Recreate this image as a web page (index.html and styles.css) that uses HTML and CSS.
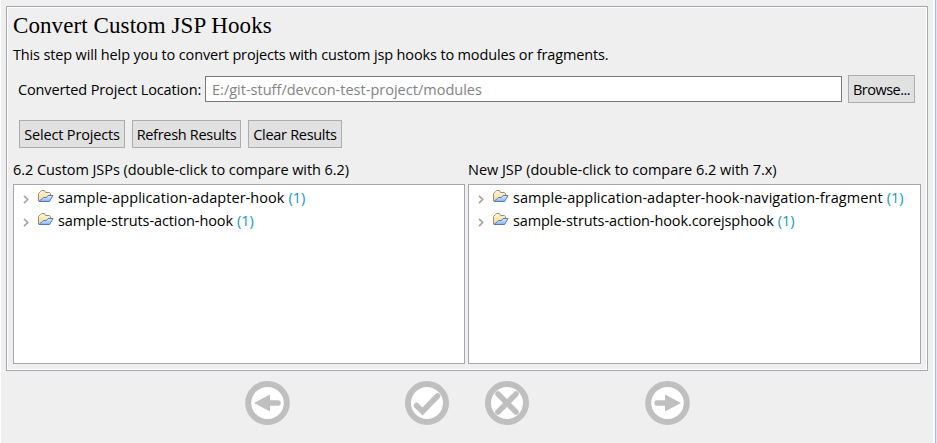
FILE: index.html
```html
<!DOCTYPE html>
<html lang="en">
<head>
<meta charset="utf-8">
<title>Convert Custom JSP Hooks</title>
<link rel="stylesheet" href="styles.css">
</head>
<body>
<svg class="defs" width="0" height="0">
  <defs>
    <linearGradient id="back" x1="0" y1="0" x2="0" y2="1"><stop offset="0" stop-color="#fff6d8"/><stop offset="1" stop-color="#f6d98c"/></linearGradient>
    <linearGradient id="front" x1="0" y1="0" x2="0" y2="1"><stop offset="0" stop-color="#e4f1ff"/><stop offset="1" stop-color="#86b4f4"/></linearGradient>
  </defs>
  <symbol id="folder" viewBox="0 0 16 13">
    <path d="M.5 11V3.500L2.500 1.500 3.500.5h3l1 2h4l1 1.200V6" fill="url(#back)" stroke="#96917f"/>
    <path d="M.8 11.500 4.500 8.500 5.500 7.500h3l1.500-2h5L11.500 11.500Z" fill="url(#front)" stroke="#5a76bc"/>
  </symbol>
  <symbol id="chevron" viewBox="0 0 6 9"><path d="M1 .8 4.700 4.500 1 8.200" fill="none" stroke="#a6a6a6" stroke-width="1.700"/></symbol>
</svg>
<main class="page">
  <section class="group">
    <h1 class="title">Convert Custom JSP Hooks</h1>
    <p class="intro">This step will help you to convert projects with custom jsp hooks to modules or fragments.</p>
    <div class="location">
      <label class="location-label">Converted Project Location:</label>
      <div class="field">E:/git-stuff/devcon-test-project/modules</div>
      <button class="btn browse">Browse...</button>
    </div>
    <div class="actions">
      <button class="btn select">Select Projects</button>
      <button class="btn refresh">Refresh Results</button>
      <button class="btn clear">Clear Results</button>
    </div>
    <div class="panes">
      <div class="pane">
        <h2 class="caption old">6.2 Custom JSPs (double-click to compare with 6.2)</h2>
        <ul class="tree">
          <li><svg class="chev"><use href="#chevron"/></svg><svg class="fold"><use href="#folder"/></svg><span class="name adapter">sample-application-adapter-hook</span><span class="count">(1)</span></li>
          <li><svg class="chev"><use href="#chevron"/></svg><svg class="fold"><use href="#folder"/></svg><span class="name struts">sample-struts-action-hook</span><span class="count">(1)</span></li>
        </ul>
      </div>
      <div class="pane">
        <h2 class="caption new">New JSP (double-click to compare 6.2 with 7.x)</h2>
        <ul class="tree">
          <li><svg class="chev"><use href="#chevron"/></svg><svg class="fold"><use href="#folder"/></svg><span class="name adapter">sample-application-adapter-hook-navigation-fragment</span><span class="count">(1)</span></li>
          <li><svg class="chev"><use href="#chevron"/></svg><svg class="fold"><use href="#folder"/></svg><span class="name struts">sample-struts-action-hook.corejsphook</span><span class="count">(1)</span></li>
        </ul>
      </div>
    </div>
  </section>
  <nav class="nav">
    <svg class="nav-icon back" viewBox="0 0 45 44"><ellipse class="ring" cx="22.500" cy="22" rx="19.300" ry="19"/><path class="solid" d="M9 22 25 13.500V30.500Z"/><path class="stroke" d="M24 22H33"/></svg>
    <svg class="nav-icon ok" viewBox="0 0 44 44"><circle class="ring" cx="22" cy="22" r="19"/><path class="stroke" d="M11.500 24.500 17.500 30.500 32.500 15"/></svg>
    <svg class="nav-icon cancel" viewBox="0 0 44 44"><circle class="ring" cx="22" cy="22" r="19"/><path class="stroke" d="M13 13 31 31M31 13 13 31"/></svg>
    <svg class="nav-icon next" viewBox="0 0 45 44"><ellipse class="ring" cx="22.500" cy="22" rx="19.300" ry="19"/><path class="solid" d="M36 22 20 13.500V30.500Z"/><path class="stroke" d="M21 22H12"/></svg>
  </nav>
</main>
</body>
</html>
```

FILE: styles.css
```css
* { box-sizing: border-box; }
body {
  margin: 0;
  height: 443px;
  overflow: hidden;
  background: #fff;
  color: #000;
  font: 14.5px/20px "Open Sans", "Noto Sans", sans-serif;
  letter-spacing: -0.3px;
  white-space: nowrap;
}
h1, h2, p, ul { margin: 0; padding: 0; font-weight: 400; }
.defs { position: absolute; }
.page {
  width: 937px;
  height: 443px;
  padding: 6px 0 0 5px;
  background: #efefef;
  border-left: 1px solid #fff;
  border-right: 1px solid #dfe4f7;
  box-shadow: inset -1px 0 #b4b8cc, inset -3px 0 #fff;
}
.group {
  width: 922px;
  height: 365px;
  padding: 4px 5px 0;
  border: 1px solid #a5a7ae;
  box-shadow: inset 0 0 0 1px #fff;
}
.title {
  height: 30px;
  padding-left: 1px;
  font: 23px/30px "Liberation Serif", serif;
  letter-spacing: 0.09px;
}
.intro { height: 34px; padding: 4px 0 0 1px; letter-spacing: -0.146px; }
.location { display: flex; align-items: center; height: 28px; padding-left: 6px; }
.location-label { width: 187px; padding-top: 1px; letter-spacing: -0.13px; }
.field {
  width: 637px;
  height: 26px;
  margin-right: 6px;
  padding: 1px 0 0 6px;
  line-height: 24px;
  letter-spacing: 0.01px;
  border: 1px solid #7a7a7a;
  background: #fff;
  color: #838383;
}
.btn {
  height: 28px;
  padding: 2px 0 0;
  border: 1px solid #adadad;
  background: #e1e1e1;
  color: #000;
  font: inherit;
  letter-spacing: inherit;
  text-align: center;
}
.browse { width: 67px; letter-spacing: -0.5px; }
.actions { display: flex; gap: 7px; padding: 17px 0 0 7px; }
.select { width: 106px; letter-spacing: -0.15px; }
.refresh { width: 109px; }
.clear { width: 94px; }
.panes { display: grid; grid-template-columns: 452px 453px; gap: 3px; padding: 12px 0 0 1px; }
.caption { height: 24px; font-size: 14.5px; line-height: 20px; }
.old { letter-spacing: -0.06px; }
.new { letter-spacing: -0.02px; }
.tree {
  height: 180px;
  padding: 2px 0 0 9px;
  list-style: none;
  border: 1px solid #a5a7ae;
  background: #fff;
}
.tree li { display: flex; align-items: center; height: 23px; }
.chev { width: 6px; height: 9px; margin: 2px 9px 0 0; }
.fold { width: 16px; height: 13px; margin: -4px 4px 0 0; }
.name, .count { padding-bottom: 2px; }
.adapter { letter-spacing: 0.06px; }
.struts { letter-spacing: -0.1px; }
.count { margin-left: 4px; color: #1199bb; letter-spacing: 0; }
.nav { display: flex; padding: 10px 0 0 239px; }
.nav-icon { width: 44px; height: 44px; }
.nav-icon.back, .nav-icon.next { width: 45px; }
.ok { margin-left: 115px; }
.cancel { margin-left: 36px; }
.next { margin-left: 116px; }
.ring { fill: #fff; stroke: #bfbfbf; stroke-width: 6; }
.solid { fill: #bfbfbf; }
.stroke { fill: none; stroke: #bfbfbf; stroke-width: 5.5; stroke-linecap: round; }
```
